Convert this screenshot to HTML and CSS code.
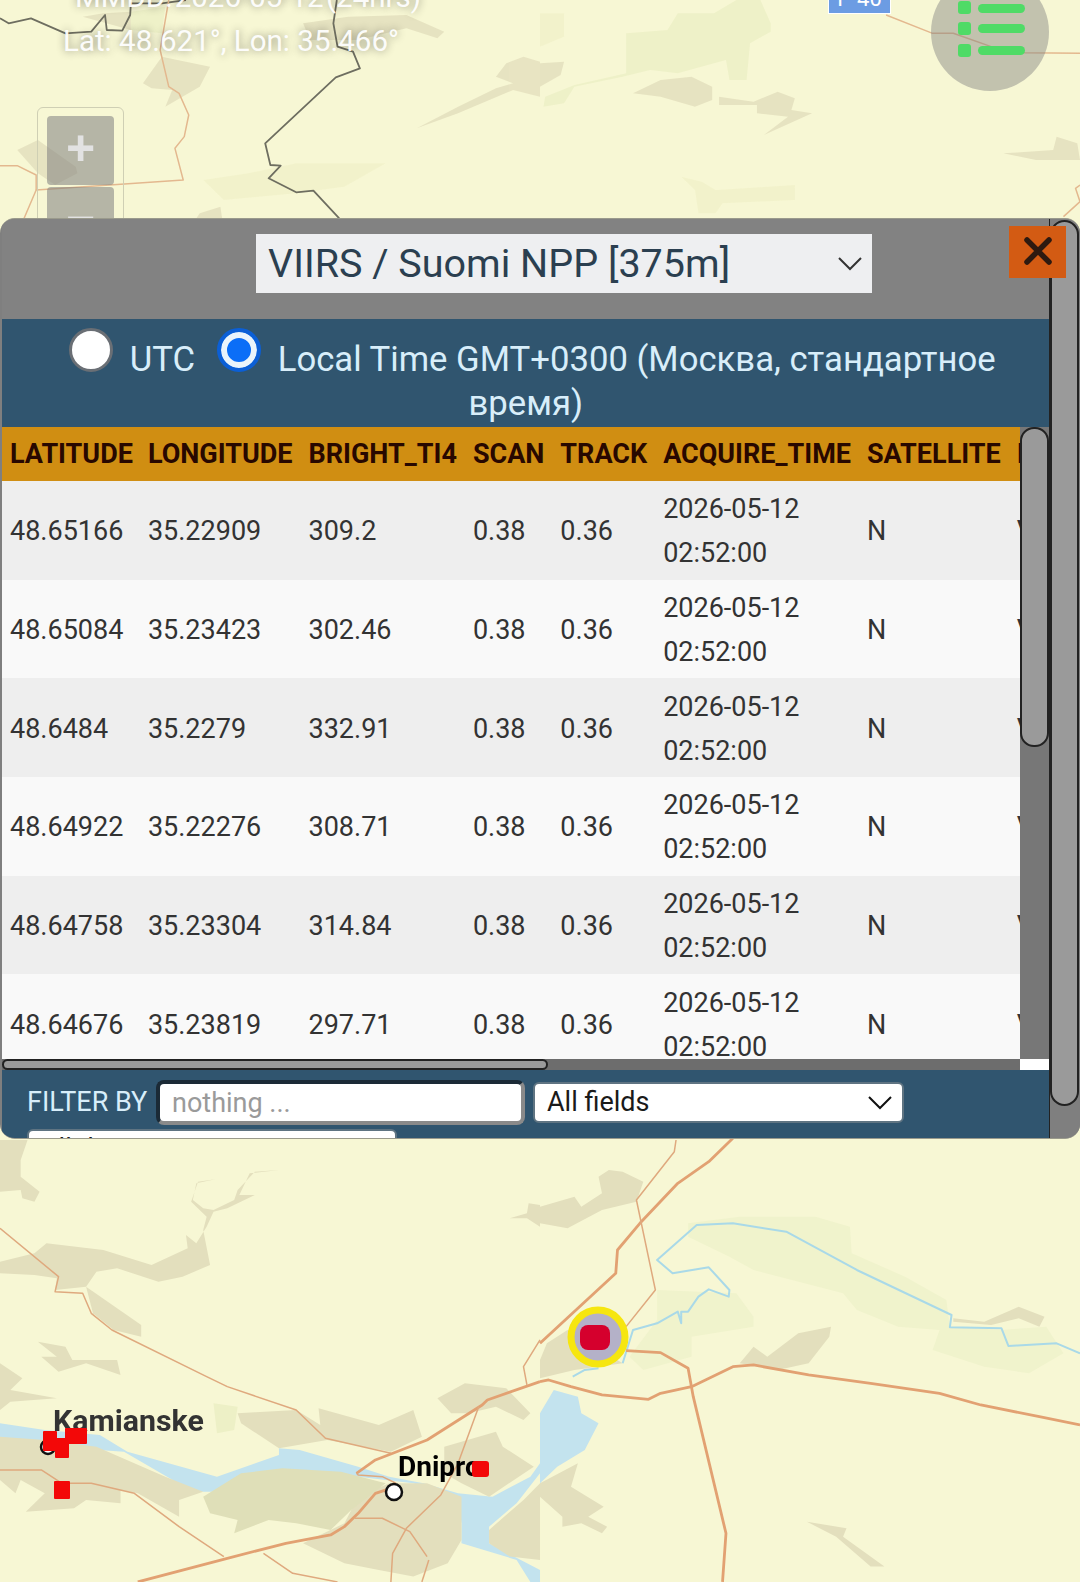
FILE: index.html
```html
<!DOCTYPE html>
<html lang="en">
<head>
<meta charset="utf-8">
<title>Fire data table</title>
<link rel="stylesheet" href="styles.css">
</head>
<body>
<div class="stage">
  <svg class="map" width="1080" height="1582" viewBox="0 0 1080 1582" xmlns="http://www.w3.org/2000/svg">
    <rect class="land" width="1080" height="1582"/>
    <g class="washed" transform="scale(.3444 .3333)">
      <polygon class="soft" points="590,540 720,520 860,490 1120,490 1000,560 860,580 650,600"/>
      <polygon class="urban" points="170,15 240,50 300,40 380,35 380,90 240,50"/>
      <polygon class="green" points="380,35 480,20 470,100 380,90"/>
      <polygon class="urban" points="880,70 1010,50 1180,45 1290,95 1270,115 1180,85 1040,120 900,120"/>
      <polygon class="urban" points="1210,385 1330,320 1440,265 1490,250 1440,230 1470,190 1520,170 1568,185 1568,290 1490,270 1330,340"/>
      <polygon class="urban" points="415,250 470,170 610,200 580,260 480,320 500,270 440,265"/>
      <polygon class="urban" points="50,450 110,420 220,500 225,520 160,555 110,520"/>
      <polygon class="urban" points="580,640 640,620 645,655 570,655"/>
      <polyline class="border" points="0,55 25,70 90,55 190,100 265,95 305,45 310,90 355,92 378,45 380,10 470,10 540,0"/>
      <polyline class="border" points="978,0 968,70 980,140 1025,155 1045,205 975,232 770,430 785,495 815,497 780,535 860,577 910,572 985,655"/>
      <polyline class="road" points="490,0 465,150 490,260 520,280 548,345 535,410 508,445 532,540 105,570 70,655"/>
      <polyline class="road" points="0,497 50,497 105,525 105,570"/>
    </g>
    <g class="washed" transform="translate(540 0) scale(.3444 .3333)">
      <polygon class="green" points="250,100 370,90 400,40 505,40 570,0 640,0 670,70 670,95 610,130 600,240 550,240 540,180 400,220 320,210 240,230 100,260 70,310 10,320 15,290 100,255 250,220"/>
      <polygon class="soft" points="0,40 70,40 70,110 0,140"/>
      <polygon class="urban" points="270,280 350,240 440,230 500,260 500,300 450,320 350,290"/>
      <polygon class="urban" points="520,290 620,305 690,275 740,295 730,330 790,340 650,405 720,350 630,340 630,315 520,315"/>
      <polygon class="urban" points="1345,460 1490,450 1500,410 1560,430 1568,480 1440,480"/>
      <polygon class="urban" points="0,190 70,185 60,225 0,260"/>
      <polygon class="soft" points="410,530 470,545 510,570 740,555 740,600 530,610 510,640 460,640 450,570"/>
      <polyline class="road" points="1005,45 1140,100 1200,100 1310,140 1408,158 1568,160"/>
      <polyline class="road" points="1568,555 1555,565 1568,605 1520,650"/>
    </g>
    <g transform="translate(0 1130) scale(.3444 .3333)">
      <polygon class="urban" points="0,30 80,30 60,90 60,140 115,185 100,215 65,205 60,180 0,185"/>
      <polygon class="urban" points="0,395 100,370 135,340 300,360 440,405 545,355 540,315 570,340 600,290 620,245 660,235 740,195 695,195 725,130 810,120 740,125 690,180 680,210 620,240 590,235 560,210 570,160 625,148 575,155 555,215 600,260 590,300 610,405 530,440 460,455 340,415 280,425 250,470 160,480 165,445 100,435 0,430"/>
      <polygon class="urban" points="250,470 410,585 410,620 330,600 270,550"/>
      <polygon class="urban" points="110,635 190,650 210,690 340,690 350,735 250,700 170,725 120,680 165,680"/>
      <polygon class="urban" points="0,700 65,745 30,780 165,805 30,815 0,840"/>
      <polygon class="urban" points="1480,265 1530,250 1535,220 1568,225 1568,290 1530,265"/>
      <polygon class="green" points="620,820 690,830 680,900 630,910"/>
      <polygon class="urban" points="690,850 860,840 930,885 925,835 1100,885 1200,840 1225,920 1135,965 950,930 810,955 700,880"/>
      <polygon class="urban" points="1270,805 1350,760 1470,775 1540,850 1520,870 1440,830 1360,850 1310,850"/>
      <polygon class="water" points="0,880 130,900 290,915 370,965 630,1040 810,975 810,955 870,960 1040,1010 1130,1040 1230,1060 1330,1090 1430,1100 1540,1040 1568,1000 1568,1030 1500,1120 1420,1190 1420,1240 1568,1320 1568,1356 1540,1356 1500,1290 1340,1240 1340,1180 1330,1110 1200,1060 1040,1040 700,1040 620,1085 560,1085 360,965 0,940"/>
      <polygon class="urban" points="0,920 130,930 280,950 480,1040 590,1085 520,1110 520,1160 400,1090 350,1080 350,1120 250,1110 215,1135 75,1145 130,1090 60,1050 45,1090 0,1050"/>
      <polygon class="urban" points="1290,950 1440,905 1460,950 1550,1010 1420,1100 1340,1060 1290,1030"/>
      <polygon class="urban" points="880,1240 1000,1180 1040,1100 1130,1060 1240,1060 1340,1100 1340,1230 1300,1300 1200,1340 1100,1320 1000,1300"/>
      <polygon class="urban" points="1420,1200 1520,1110 1568,1060 1568,1290 1480,1280 1420,1240"/>
      <polygon class="moss" points="590,1100 700,1030 820,1015 990,1025 1120,1060 1020,1140 960,1200 860,1180 780,1170 680,1210 690,1170 610,1150"/>
      <polyline class="road" points="0,295 170,440 160,485 240,490 265,550 325,600 600,740 660,770 860,840 945,925 1135,970"/>
      <polyline class="road-thick" points="1035,1030 1090,990 1240,930 1400,825 1415,810 1568,755"/>
      <polyline class="road" points="1035,1030 1040,1035 1110,1040 1150,1060"/>
      <polyline class="road" points="1568,630 1520,710 1530,765"/>
      <polyline class="road" points="1390,830 1330,1000 1280,1095 1180,1195 1140,1270 1135,1356"/>
      <polyline class="road-thick" points="1150,1070 1090,1090 1040,1150 1000,1190 960,1215 830,1240 660,1285 400,1356"/>
      <polyline class="road" points="1030,1165 1110,1165 1190,1205 1240,1280"/>
      <polyline class="road" points="1245,1290 1225,1356"/>
      <polyline class="road" points="0,1020 120,1020 180,1060 265,1060 390,1090 520,1190 650,1280"/>
      <polyline class="road" points="765,1270 850,1330 980,1356"/>
    </g>
    <g transform="translate(540 1130) scale(.3444 .3333)">
      <polygon class="urban" points="0,230 100,200 120,230 180,190 170,140 200,120 240,125 300,155 280,215 180,240 80,295 0,280"/>
      <polygon class="urban" points="20,640 80,600 240,700 100,720 0,745 0,690"/>
      <polygon class="urban" points="580,700 620,650 660,680 750,610 845,590 840,620 780,700 690,720"/>
      <polygon class="urban" points="0,1060 110,1000 90,1070 185,1130 140,1160 195,1190 180,1210 120,1180 65,1190 65,1160 0,1100"/>
      <polygon class="urban" points="775,1175 890,1195 880,1220 1000,1310 960,1310 860,1220"/>
      <polygon class="green-light" points="430,280 580,260 800,260 900,290 905,370 1060,440 1180,510 1190,590 1340,600 1470,590 1520,670 1420,730 1290,710 1140,660 1160,600 1040,590 920,540 880,490 620,420 550,380 430,320"/>
      <polygon class="green-light" points="340,480 570,490 620,560 620,590 440,620 440,680 300,720 260,680 340,570"/>
      <polygon class="urban" points="1200,565 1290,575 1390,530 1465,560 1450,590 1390,565 1310,585 1200,575"/>
      <polygon class="water" points="40,780 110,800 120,850 170,880 130,960 50,1010 0,1060 0,850"/>
      <polyline class="river" points="1568,670 1500,640 1360,648 1340,595 1190,592 1195,555 920,420 715,305 560,280 455,285 340,390 385,430 490,412 550,480 548,500 490,478 460,500 430,545 410,545 410,580 400,545 340,580 270,600 240,700"/>
      <polyline class="river" points="95,740 130,720 170,715"/>
      <polyline class="road-thick" points="0,640 220,430 225,360 290,280 400,160 490,95 560,25"/>
      <polyline class="road-thick" points="0,755 25,750 90,770 180,795 315,808 350,790 440,770 560,710 620,705 780,735 960,760 1160,790 1280,825 1450,860 1568,885"/>
      <polyline class="road" points="395,30 390,65 280,210 335,480 250,590"/>
      <polyline class="road-thick" points="250,662 350,668 430,715 445,800 540,1210 530,1356"/>
    </g>
    <text class="city city-soft" x="53" y="1431">Kamianske</text>
    <text class="city" x="398" y="1476">Dnipro</text>
    <circle class="town" cx="48" cy="1447" r="7"/>
    <circle class="town" cx="394" cy="1492" r="8"/>
    <g class="fire">
      <rect x="43" y="1431" width="14" height="20" rx="1"/>
      <rect x="55" y="1438" width="14" height="20" rx="1"/>
      <rect x="65" y="1428" width="22" height="16" rx="1"/>
      <rect x="54" y="1481" width="16" height="18" rx="1"/>
      <rect x="472" y="1461" width="17" height="16" rx="3"/>
    </g>
    <circle class="halo" cx="598" cy="1337" r="27"/>
    <rect class="hot" x="580" y="1325" width="30" height="25" rx="8"/>
  </svg>

  <div class="road-sign">Р-40</div>

  <div class="coords">
    <div class="coords-line">MMDD: 2026-05-12 (24hrs)</div>
    <div class="coords-line">Lat: 48.621°, Lon: 35.466°</div>
  </div>

  <div class="zoom-ctl">
    <div class="zoom-btn">+</div>
    <div class="zoom-btn">−</div>
  </div>

  <svg class="menu-btn" width="118" height="118" viewBox="0 0 118 118" xmlns="http://www.w3.org/2000/svg">
    <circle class="menu-disc" cx="59" cy="59" r="59"/>
    <g class="menu-bars">
      <rect x="27" y="28" width="13" height="13" rx="3"/>
      <rect x="47" y="31" width="47" height="9" rx="4.5"/>
      <rect x="27" y="49" width="13" height="13" rx="3"/>
      <rect x="47" y="51" width="47" height="9" rx="4.5"/>
      <rect x="27" y="71" width="13" height="13" rx="3"/>
      <rect x="47" y="73" width="47" height="9" rx="4.5"/>
    </g>
  </svg>

  <section class="panel">
    <div class="panel-main">
      <header class="panel-head">
        <div class="source-select">
          <span>VIIRS / Suomi NPP [375m]</span>
          <svg class="chev" width="24" height="14" viewBox="0 0 24 14"><polyline points="1,1 12,12 23,1"/></svg>
        </div>
      </header>
      <div class="time-row">
        <label class="time-opt"><input class="radio" type="radio" name="tz">UTC</label>
        <label class="time-opt"><input class="radio" type="radio" name="tz" checked>Local Time GMT+0300 (Москва, стандартное время)</label>
      </div>
      <div class="table-wrap">
        <div class="table-view">
          <table class="data">
            <thead>
              <tr><th>LATITUDE</th><th>LONGITUDE</th><th>BRIGHT_TI4</th><th>SCAN</th><th>TRACK</th><th>ACQUIRE_TIME</th><th>SATELLITE</th><th>INSTRUMENT</th></tr>
            </thead>
            <tbody>
              <tr><td>48.65166</td><td>35.22909</td><td>309.2</td><td>0.38</td><td>0.36</td><td>2026-05-12<br>02:52:00</td><td>N</td><td>VIIRS</td></tr>
              <tr><td>48.65084</td><td>35.23423</td><td>302.46</td><td>0.38</td><td>0.36</td><td>2026-05-12<br>02:52:00</td><td>N</td><td>VIIRS</td></tr>
              <tr><td>48.6484</td><td>35.2279</td><td>332.91</td><td>0.38</td><td>0.36</td><td>2026-05-12<br>02:52:00</td><td>N</td><td>VIIRS</td></tr>
              <tr><td>48.64922</td><td>35.22276</td><td>308.71</td><td>0.38</td><td>0.36</td><td>2026-05-12<br>02:52:00</td><td>N</td><td>VIIRS</td></tr>
              <tr><td>48.64758</td><td>35.23304</td><td>314.84</td><td>0.38</td><td>0.36</td><td>2026-05-12<br>02:52:00</td><td>N</td><td>VIIRS</td></tr>
              <tr><td>48.64676</td><td>35.23819</td><td>297.71</td><td>0.38</td><td>0.36</td><td>2026-05-12<br>02:52:00</td><td>N</td><td>VIIRS</td></tr>
            </tbody>
          </table>
        </div>
        <div class="vbar"><div class="vthumb"></div></div>
        <div class="hbar"><div class="hthumb"></div></div>
        <div class="corner"></div>
      </div>
      <div class="filter-row">
        <span class="filter-label">FILTER BY</span>
        <input class="filter-input" type="text" placeholder="nothing ...">
        <div class="field-select">
          <span>All fields</span>
          <svg class="chev-dark" width="24" height="14" viewBox="0 0 24 14"><polyline points="1,1 12,12 23,1"/></svg>
        </div>
        <div class="field-select field-second"><span>All days</span></div>
      </div>
    </div>
    <div class="outer-track"><div class="outer-thumb"></div></div>
    <button class="close-btn" type="button" aria-label="Close">
      <svg width="32" height="32" viewBox="0 0 32 32"><path d="M5 5 27 27M27 5 5 27"/></svg>
    </button>
  </section>
</div>
</body>
</html>
```

FILE: styles.css
```css
* { box-sizing: border-box; }
html, body { margin: 0; padding: 0; }
body { font-family: Roboto, "Noto Sans", sans-serif; background: #f7f7d3; }

.stage { position: relative; width: 1080px; height: 1582px; overflow: hidden; }

.map { position: absolute; inset: 0; display: block; filter: blur(.7px); }
.land { fill: #f7f7d4; }
.washed { opacity: .8; }
.urban { fill: #e3dfbd; }
.moss { fill: #dfdfb8; }
.green { fill: #edf0c6; }
.green-light { fill: #f0f3cc; }
.soft { fill: #f2f2ca; }
.water { fill: #c3e3ee; }
.road, .road-thick, .river, .border { fill: none; stroke-linejoin: round; vector-effect: non-scaling-stroke; }
.road { stroke: #dfa97e; stroke-width: 1.5; }
.road-thick { stroke: #e2a172; stroke-width: 2.8; }
.river { stroke: #a9d9e8; stroke-width: 2; }
.border { stroke: #4c4c44; stroke-width: 1.8; }
.city { font-family: Roboto, sans-serif; font-weight: 700; font-size: 28px; fill: #000; }
.city-soft { fill: #333; font-size: 30.3px; }
.town { fill: #fff; stroke: #111; stroke-width: 2.5; }
.fire rect { fill: #f30808; }
.halo { fill: #b4b1c8; stroke: #f6e60f; stroke-width: 7; }
.hot { fill: #d5002d; }

.road-sign {
  position: absolute; left: 828px; top: -16px; width: 63px; height: 30px;
  background: #6c9ce3; border: 1px solid #fff; color: #fff;
  font-size: 22px; line-height: 28px; text-align: center;
}

.coords {
  position: absolute; left: 63px; top: -25px;
  color: rgba(255, 255, 255, .95); font-size: 29.5px; line-height: 44px;
  text-shadow: 0 0 8px rgba(0, 0, 0, .45);
  white-space: nowrap;
}
.coords-line:first-child { padding-left: 12px; word-spacing: -5px; }

.zoom-ctl {
  position: absolute; left: 37px; top: 107px; width: 87px; height: 130px;
  padding: 8px 9px; border: 1.5px solid #cfcfb4; border-radius: 6px;
  display: flex; flex-direction: column; gap: 2px;
}
.zoom-btn {
  height: 69px; flex: none; border-radius: 4px;
  background: rgba(128, 128, 128, .55); color: #e2e2e2;
  font: 700 50px/65px "Liberation Sans", sans-serif; text-align: center;
}

.menu-btn { position: absolute; left: 931px; top: -27px; display: block; }
.menu-disc { fill: rgba(128, 128, 128, .45); }
.menu-bars rect { fill: #4fdb66; }

.panel {
  position: absolute; left: 0; top: 218px; width: 1080px; height: 921px;
  display: flex; overflow: hidden;
  border-radius: 15px; border: 1px solid #9a9a8c; border-width: 1px 0 1px 0;
  background: #7f7f7f;
}
.panel-main {
  width: 1050px; flex: none; padding-left: 2px; border-right: 1px solid #222;
  display: flex; flex-direction: column;
}
.panel-head {
  height: 100px; flex: none; background: #828282;
  display: flex; justify-content: center; padding: 15px 0 0 77px;
}
.source-select {
  width: 616px; height: 59px; background: #eeeff1; color: #2b3f50;
  padding: 0 10px 0 12px; font-size: 39.5px; line-height: 57px;
  display: flex; justify-content: space-between; align-items: center;
}
.chev polyline, .chev-dark polyline { fill: none; stroke: #333; stroke-width: 2; }
.chev-dark polyline { stroke: #111; }

.time-row {
  flex: none; height: 108px; background: #30556f; color: #d8eefa;
  padding: 9px 0 0 7px; font-size: 34.7px; line-height: 44px; text-align: center;
}
.time-opt { margin: 0 6.5px; }
.radio {
  appearance: none; -webkit-appearance: none; display: inline-block;
  width: 44px; height: 44px; margin: 0 17px 0 0; border-radius: 50%;
  background: #fff; border: 3px solid #6a6f75;
  vertical-align: -1px;
}
.radio:checked {
  background: #0b6ef7; border: 4px solid #0b5fd6;
  box-shadow: inset 0 0 0 6px #eaf4fb;
}

.table-wrap {
  flex: none; height: 643px;
  display: grid; grid-template-columns: 1018px 29px; grid-template-rows: 632px 11px;
}
.table-view { overflow: hidden; background: #fff; }
.data { border-collapse: collapse; font-size: 27px; line-height: 44px; color: #333; }
.data th {
  background: #d08e12; color: #280800; font-weight: 700; text-align: left;
  height: 54px; padding: 0 8px; white-space: nowrap; font-size: 27px; line-height: 44px;
}
.data td { height: 98.7px; padding: 2px 8px 0; white-space: nowrap; }
.data th:first-child, .data td:first-child { padding-right: 7px; }
.data tbody tr:nth-child(odd) td { background: #eeeeee; }
.data tbody tr:nth-child(even) td { background: #f9f9f9; }

.vbar { background: #777; }
.vthumb {
  height: 320px; background: #9a9a9a; border: 2px solid #222; border-radius: 14px;
}
.hbar { background: #6d6d6d; }
.hthumb {
  width: 546px; height: 11px; background: #9a9a9a; border: 2px solid #222; border-radius: 6px;
}
.corner { background: #fff; }

.filter-row {
  flex: 1; min-height: 0; background: #30556f; overflow: hidden;
  padding: 11px 0 0 25px;
  display: flex; flex-wrap: wrap; align-items: flex-start; column-gap: 8px; row-gap: 3px;
  color: #d8eefa; font-size: 27px;
}
.filter-label { width: 121px; line-height: 42px; }
.filter-input {
  width: 369px; height: 45px; padding: 0 12px; margin: -1px 0 0;
  border: 4px solid; border-color: #1b2a36 #8a8a8a #8a8a8a #1b2a36; border-radius: 8px;
  background: #fff; font: 27px Roboto, sans-serif; color: #333; outline: none;
}
.filter-input::placeholder { color: #9a9a9a; opacity: 1; }
.field-select {
  width: 371px; height: 41px; margin-top: 1px; padding: 0 10px 0 12px;
  background: #fff; color: #1a1a1a; border: 2px solid #5f7482; border-radius: 6px;
  display: flex; justify-content: space-between; align-items: center; line-height: 37px;
}
.field-second { flex: none; width: 370px; }

.outer-track { flex: 1; min-width: 0; background: #7f7f7f; padding-top: 1px; }
.outer-thumb {
  width: 29px; height: 886px; background: #9a9a9a;
  border: 2px solid #222; border-radius: 15px;
}

.close-btn {
  position: absolute; left: 1009px; top: 7px; width: 57px; height: 52px;
  padding: 0 0 3px; border: 0; background: #d35b13;
  display: flex; align-items: center; justify-content: center;
}
.close-btn path { fill: none; stroke: #2e1a10; stroke-width: 5.5; stroke-linecap: round; }
```
